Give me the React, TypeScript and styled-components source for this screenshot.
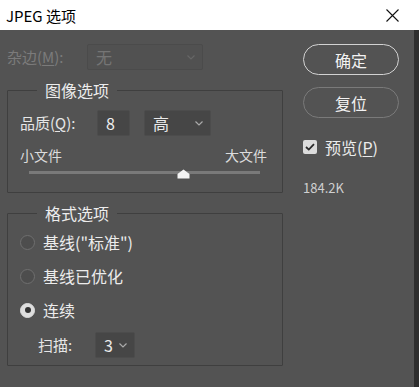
import React, { useState } from 'react';
import styled, { createGlobalStyle } from 'styled-components';

const GlobalStyle = createGlobalStyle`
  html, body {
    margin: 0;
    padding: 0;
    background: #535353;
  }
  body {
    font-family: "Noto Sans CJK SC", "Noto Sans", sans-serif;
  }
`;

const Window = styled.div`
  width: 419px;
  height: 387px;
  display: flex;
  flex-direction: column;
  overflow: hidden;
`;

const TitleBar = styled.div`
  height: 30px;
  background: #ffffff;
  display: flex;
  align-items: center;
  justify-content: space-between;
  padding: 0 20px 0 6px;
  color: #000;
  font-size: 15px;
  line-height: 1;
`;

const CloseIcon = styled.svg`
  width: 13px;
  height: 13px;
`;

const Body = styled.div`
  flex: 1;
  background: #535353;
  border-right: 5px solid #2e2e2e;
  display: flex;
  gap: 20px;
  padding: 14px 0 0 7px;
  color: #e6e6e6;
`;

const LeftCol = styled.div`
  width: 276px;
  display: flex;
  flex-direction: column;
`;

const RightCol = styled.div`
  width: 96px;
  display: flex;
  flex-direction: column;
`;

const Row = styled.div<{ $gap?: number; $pl?: number; $mt?: number }>`
  display: flex;
  align-items: center;
  gap: ${p => p.$gap ?? 0}px;
  padding-left: ${p => p.$pl ?? 0}px;
  margin-top: ${p => p.$mt ?? 0}px;
`;

const Label = styled.span<{ $disabled?: boolean; $w?: number }>`
  font-size: 15px;
  line-height: 20px;
  color: ${p => (p.$disabled ? '#7b7b7b' : '#e6e6e6')};
  width: ${p => (p.$w ? `${p.$w}px` : 'auto')};
  white-space: nowrap;
`;

const U = styled.span`
  text-decoration: underline;
  text-underline-offset: 2px;
`;

const Select = styled.div<{ $w: number; $disabled?: boolean; $ml?: number }>`
  width: ${p => p.$w}px;
  height: 26px;
  margin-left: ${p => p.$ml ?? 0}px;
  box-sizing: border-box;
  background: ${p => (p.$disabled ? '#515151' : '#464646')};
  border: 1px solid ${p => (p.$disabled ? '#4b4b4b' : '#4c4c4c')};
  border-radius: 2px;
  display: flex;
  align-items: center;
  justify-content: space-between;
  padding: 0 7px 0 8px;
  font-size: 16px;
  color: ${p => (p.$disabled ? '#757575' : '#eaeaea')};
`;

const Chevron = styled.svg<{ $disabled?: boolean }>`
  width: 8px;
  height: 5px;
  stroke: ${p => (p.$disabled ? '#666' : '#aaa')};
  fill: none;
  stroke-width: 1.2;
`;

const NumberBox = styled.div`
  width: 33px;
  height: 26px;
  box-sizing: border-box;
  background: #464646;
  border: 1px solid #4c4c4c;
  border-radius: 2px;
  display: flex;
  align-items: center;
  padding-left: 8px;
  font-size: 16px;
  color: #f0f0f0;
`;

const Group = styled.fieldset<{ $h: number; $mt: number }>`
  margin: ${p => p.$mt}px 0 0 0;
  padding: 0 0 0 12px;
  height: ${p => p.$h}px;
  box-sizing: border-box;
  border: 1px solid #3f3f3f;
  border-radius: 1px;
  min-width: 0;
`;

const Legend = styled.legend`
  margin-left: 17px;
  padding: 0 8px;
  font-size: 16px;
  line-height: 20px;
  color: #ececec;
`;

const SizeLabels = styled.div`
  display: flex;
  justify-content: space-between;
  width: 247px;
  margin-top: 10px;
  font-size: 14px;
  line-height: 18px;
  color: #dcdcdc;
`;

const Track = styled.div`
  position: relative;
  margin: 7px 0 0 9px;
  width: 231px;
  height: 3px;
  background: #7a7a7a;
`;

const Thumb = styled.svg`
  position: absolute;
  top: -2px;
  width: 13px;
  height: 10px;
`;

const RadioRow = styled.label`
  display: flex;
  align-items: center;
  gap: 8px;
  height: 20px;
  font-size: 16px;
  line-height: 20px;
  color: #ececec;
  cursor: pointer;
`;

const RadioDot = styled.span<{ $checked: boolean }>`
  width: 15px;
  height: 15px;
  box-sizing: border-box;
  border-radius: 50%;
  border: 1px solid ${p => (p.$checked ? '#dcdcdc' : '#6f6f6f')};
  background: ${p => (p.$checked ? '#dedede' : '#4d4d4d')};
  display: flex;
  align-items: center;
  justify-content: center;
  &::after {
    content: '';
    width: 6px;
    height: 6px;
    border-radius: 50%;
    background: #333;
    display: ${p => (p.$checked ? 'block' : 'none')};
  }
`;

const RadioList = styled.div`
  display: flex;
  flex-direction: column;
  gap: 14px;
  margin-top: 9px;
`;

const PillButton = styled.button<{ $primary?: boolean; $mt: number }>`
  margin-top: ${p => p.$mt}px;
  width: 96px;
  height: 31px;
  border-radius: 16px;
  background: transparent;
  border: 1.5px solid ${p => (p.$primary ? '#d2d2d2' : '#7a7a7a')};
  color: #f2f2f2;
  font-family: inherit;
  font-size: 16px;
  line-height: 1;
  padding: 0;
  cursor: pointer;
`;

const CheckRow = styled.label`
  margin-top: 19px;
  display: flex;
  align-items: center;
  gap: 8px;
  font-size: 16px;
  line-height: 20px;
  color: #ececec;
`;

const CheckBox = styled.span`
  width: 14px;
  height: 14px;
  border-radius: 2px;
  background: #dcdcdc;
  display: flex;
  align-items: center;
  justify-content: center;
`;

const FileSize = styled.div`
  margin-top: 23px;
  font-size: 13px;
  line-height: 16px;
  color: #d0d0d0;
`;

const ChevronIcon = ({ disabled }: { disabled?: boolean }) => (
  <Chevron $disabled={disabled} viewBox="0 0 8 5">
    <path d="M0.5 0.5 L4 4 L7.5 0.5" />
  </Chevron>
);

export default function App() {
  const [format, setFormat] = useState(2);
  const quality = 8;
  const thumbPos = 154;

  return (
    <>
      <GlobalStyle />
      <Window>
        <TitleBar>
          <span>JPEG 选项</span>
          <CloseIcon viewBox="0 0 13 13">
            <path d="M0.5 0.5 L12.5 12.5 M12.5 0.5 L0.5 12.5" stroke="#111" strokeWidth="1.1" />
          </CloseIcon>
        </TitleBar>
        <Body>
          <LeftCol>
            <Row>
              <Label $disabled $w={80}>
                杂边(<U>M</U>):
              </Label>
              <Select $w={116} $disabled>
                <span>无</span>
                <ChevronIcon disabled />
              </Select>
            </Row>

            <Group $h={113} $mt={10}>
              <Legend>图像选项</Legend>
              <Row $mt={10}>
                <Label $w={77}>
                  品质(<U>Q</U>):
                </Label>
                <NumberBox>{quality}</NumberBox>
                <Select $w={67} $ml={14}>
                  <span>高</span>
                  <ChevronIcon />
                </Select>
              </Row>
              <SizeLabels>
                <span>小文件</span>
                <span>大文件</span>
              </SizeLabels>
              <Track>
                <Thumb viewBox="0 0 13 10" style={{ left: thumbPos - 6 }}>
                  <path d="M6.5 0.5 L12.5 5 L12.5 9.5 L0.5 9.5 L0.5 5 Z" fill="#f4f4f4" />
                </Thumb>
              </Track>
            </Group>

            <Group $h={163} $mt={10}>
              <Legend>格式选项</Legend>
              <RadioList>
                {['基线("标准")', '基线已优化', '连续'].map((t, i) => (
                  <RadioRow key={t} onClick={() => setFormat(i)}>
                    <RadioDot $checked={format === i} />
                    <span>{t}</span>
                  </RadioRow>
                ))}
              </RadioList>
              <Row $pl={18} $mt={12}>
                <Label $w={57}>扫描:</Label>
                <Select $w={40}>
                  <span>3</span>
                  <ChevronIcon />
                </Select>
              </Row>
            </Group>
          </LeftCol>

          <RightCol>
            <PillButton $primary $mt={0}>确定</PillButton>
            <PillButton $mt={12}>复位</PillButton>
            <CheckRow>
              <CheckBox>
                <svg width="10" height="8" viewBox="0 0 10 8">
                  <path d="M1 4 L3.8 6.6 L9 1.2" stroke="#2a2a2a" strokeWidth="1.8" fill="none" />
                </svg>
              </CheckBox>
              <span>
                预览(<U>P</U>)
              </span>
            </CheckRow>
            <FileSize>184.2K</FileSize>
          </RightCol>
        </Body>
      </Window>
    </>
  );
}
